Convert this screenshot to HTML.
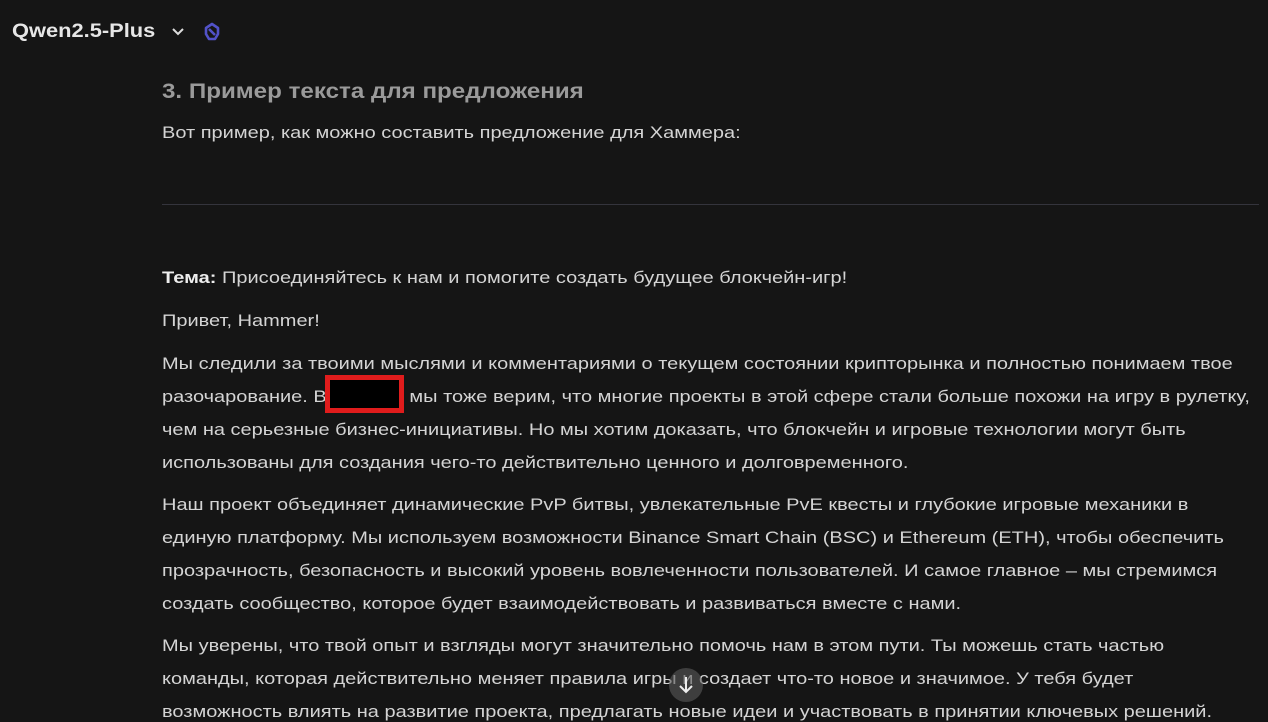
<!DOCTYPE html>
<html><head><meta charset="utf-8"><style>
html,body{margin:0;padding:0;background:#151515;width:1268px;height:714px;overflow:hidden;font-family:"Liberation Sans",sans-serif;color:#d4d4d4}
.top{position:absolute;left:12px;top:21px;font-size:19px;font-weight:bold;color:#e6e6e6;white-space:nowrap;transform:scaleX(1.15);transform-origin:left}
.l{position:absolute;left:162px;font-size:16.6px;white-space:nowrap;line-height:20px;transform:scaleX(1.205);transform-origin:left}
h3{position:absolute;left:162px;top:80px;margin:0;font-size:21px;color:#9a9a9a;font-weight:bold;white-space:nowrap;transform:scaleX(1.15);transform-origin:left}
hr{position:absolute;left:162px;top:204px;width:1097px;margin:0;border:0;border-top:1px solid #34343c}
</style></head><body>
<div class="top">Qwen2.5-Plus</div>
<svg style="position:absolute;left:170px;top:26px" width="16" height="12" viewBox="0 0 16 12"><path d="M3 3l5 5 5-5" fill="none" stroke="#ddd" stroke-width="2"/></svg>
<svg style="position:absolute;left:200px;top:20px" width="24" height="24" viewBox="0 0 24 24"><path d="M12 4l6 4v6l-3 5H9l-3-5V8z M9 9l6 6" fill="none" stroke="#5252c8" stroke-width="2.6" stroke-linejoin="round"/></svg>
<h3>3. Пример текста для предложения</h3>
<div class="l" style="top:123px">Вот пример, как можно составить предложение для Хаммера:</div>
<hr>
<div class="l" style="top:268px"><b style="color:#eee">Тема:</b> Присоединяйтесь к нам и помогите создать будущее блокчейн-игр!</div>
<div class="l" style="top:311px">Привет, Hammer!</div>
<div class="l" style="top:354px">Мы следили за твоими мыслями и комментариями о текущем состоянии крипторынка и полностью понимаем твое</div>
<div class="l" style="top:387px">разочарование. В <span style="display:inline-block;width:64px"></span>мы тоже верим, что многие проекты в этой сфере стали больше похожи на игру в рулетку,</div>
<div style="position:absolute;left:325px;top:375px;width:69px;height:28px;background:#000;border:5px solid #e01c1c"></div>
<div class="l" style="top:420px">чем на серьезные бизнес-инициативы. Но мы хотим доказать, что блокчейн и игровые технологии могут быть</div>
<div class="l" style="top:453px">использованы для создания чего-то действительно ценного и долговременного.</div>
<div class="l" style="top:495px">Наш проект объединяет динамические PvP битвы, увлекательные PvE квесты и глубокие игровые механики в</div>
<div class="l" style="top:528px">единую платформу. Мы используем возможности Binance Smart Chain (BSC) и Ethereum (ETH), чтобы обеспечить</div>
<div class="l" style="top:561px">прозрачность, безопасность и высокий уровень вовлеченности пользователей. И самое главное – мы стремимся</div>
<div class="l" style="top:594px">создать сообщество, которое будет взаимодействовать и развиваться вместе с нами.</div>
<div class="l" style="top:636px">Мы уверены, что твой опыт и взгляды могут значительно помочь нам в этом пути. Ты можешь стать частью</div>
<div class="l" style="top:669px">команды, которая действительно меняет правила игры и создает что-то новое и значимое. У тебя будет</div>
<div class="l" style="top:702px">возможность влиять на развитие проекта, предлагать новые идеи и участвовать в принятии ключевых решений.</div>
<div style="position:absolute;left:669px;top:668px;width:34px;height:34px;border-radius:50%;background:rgba(90,90,90,0.6)"><svg width="34" height="34" viewBox="0 0 34 34"><path d="M17 9v15M11 18l6 6 6-6" fill="none" stroke="#eee" stroke-width="2"/></svg></div>
</body></html>
